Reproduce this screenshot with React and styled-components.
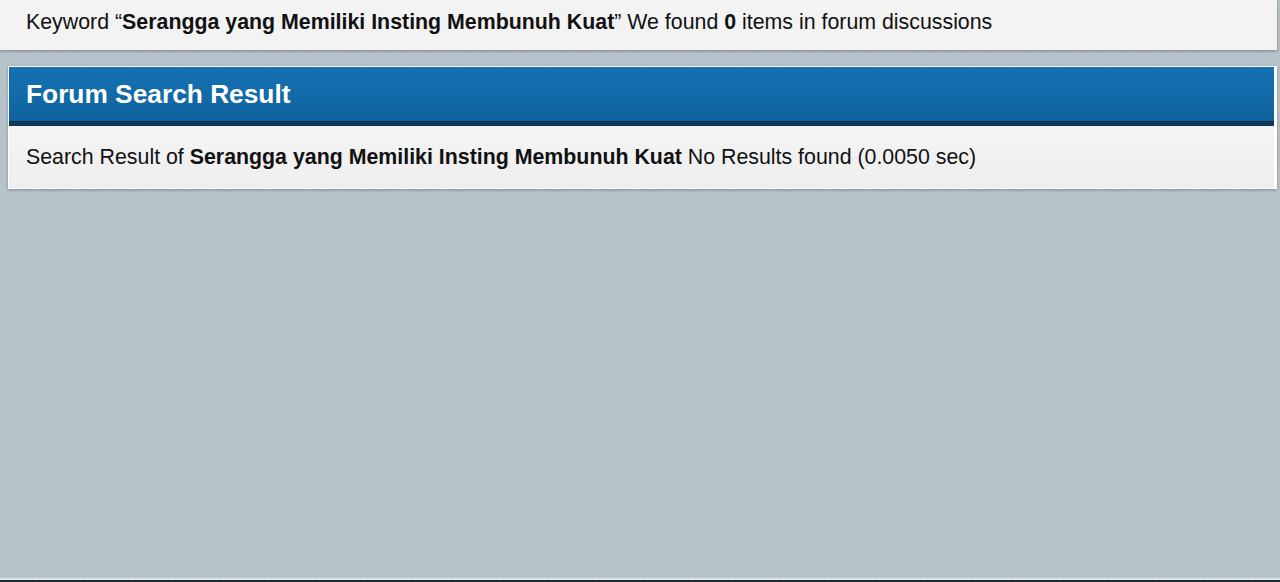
import React from "react";
import styled, { createGlobalStyle } from "styled-components";

const Global = createGlobalStyle`
  html, body { margin: 0; padding: 0; }
  body {
    font-family: "Liberation Sans", Arial, sans-serif;
    background: #b7c3cb;
    overflow: hidden;
  }
`;

const Page = styled.div`
  height: 582px;
  display: flex;
  flex-direction: column;
  background-color: #b8c4cc;
  background-image: repeating-linear-gradient(45deg, rgba(255,255,255,0.025) 0 2px, rgba(0,0,0,0.01) 2px 4px);
`;

const Main = styled.div`
  flex: 1;
`;

const KeywordBar = styled.div`
  width: 1277px;
  height: 50px;
  box-sizing: border-box;
  background: #f3f3f3;
  box-shadow: 0 1px 3px rgba(0,0,0,0.35);
  padding: 10px 0 0 26px;
  font-size: 21.35px;
  color: #111;
`;

const Panel = styled.div`
  margin: 16px 0 0 8px;
  width: 1269px;
  box-sizing: border-box;
  border: 1px solid #fff;
  border-right-width: 3px;
  box-shadow: 0 1px 3px rgba(0,0,0,0.3);
`;

const PanelHeader = styled.div`
  height: 55px;
  background: linear-gradient(#1572b3, #10629d);
  border-bottom: 4px solid #0d3b5a;
  box-shadow: inset 0 -1px 0 #0a2f49;
  box-sizing: content-box;
  display: flex;
  align-items: center;
  padding-left: 17px;
  color: #fff;
  font-size: 26.3px;
  font-weight: bold;
`;

const PanelBody = styled.div`
  height: 62px;
  box-sizing: border-box;
  background: linear-gradient(#f4f4f4, #eeeeee);
  padding: 19px 0 0 17px;
  font-size: 21.35px;
  color: #111;
`;

const Footer = styled.div`
  height: 2px;
  border-top: 2px solid #dde5ea;
  background: #1e2a33;
`;

export default function App() {
  return (
    <>
      <Global />
      <Page>
        <Main>
          <KeywordBar>
            Keyword “<b>Serangga yang Memiliki Insting Membunuh Kuat</b>” We found <b>0</b> items in forum discussions
          </KeywordBar>
          <Panel>
            <PanelHeader>Forum Search Result</PanelHeader>
            <PanelBody>
              Search Result of <b>Serangga yang Memiliki Insting Membunuh Kuat</b> No Results found (0.0050 sec)
            </PanelBody>
          </Panel>
        </Main>
        <Footer />
      </Page>
    </>
  );
}
